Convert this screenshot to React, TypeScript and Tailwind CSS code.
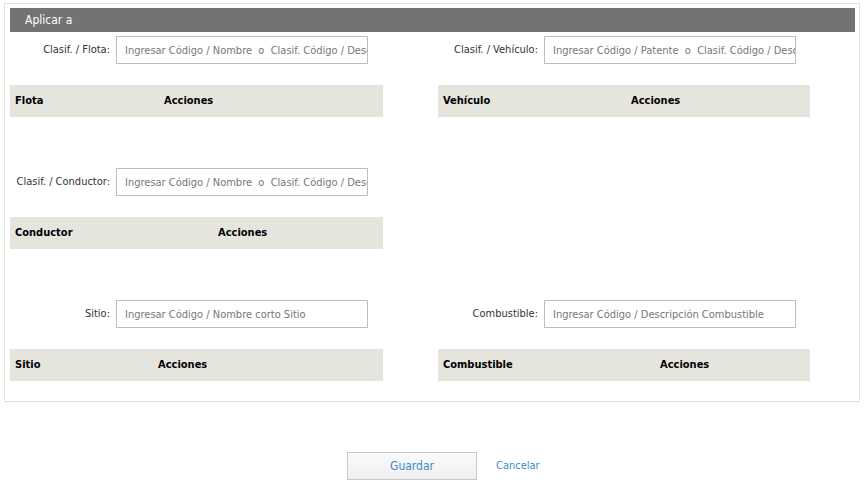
import React from "react";

const font = { fontFamily: '"DejaVu Sans Condensed", "Liberation Sans", sans-serif' };

function Field({ label, placeholder }: { label: string; placeholder: string }) {
  return (
    <div className="flex h-[28px] items-center">
      <div className="w-[106px] pr-[6px] text-right text-[11px] text-[#333]">{label}</div>
      <input
        readOnly
        placeholder={placeholder}
        className="h-[28px] w-[252px] border border-[#bdbdbd] bg-white pl-[8px] text-[11px] text-[#777] outline-none placeholder:text-[#777]"
        style={font}
      />
    </div>
  );
}

function TableHead({ first, col, width }: { first: string; col: number; width: number }) {
  return (
    <div className="mt-[21px] flex h-[32px] items-center bg-[#e5e5dd] pl-[5px] text-[11px] font-bold text-black" style={{ width }}>
      <div style={{ width: col }}>{first}</div>
      <div>Acciones</div>
    </div>
  );
}

export default function App() {
  return (
    <div className="h-[486px] w-[865px] bg-white" style={font}>
      <div className="ml-[4px] mt-[3px] h-[399px] w-[856px] border border-[#e2e2d9] px-[5px] pt-[4px]">
        <div className="flex h-[24px] w-[845px] items-center bg-[#737373] pl-[15px] text-[12px] text-white">Aplicar a</div>
        <div className="mt-[4px] flex">
          <div className="w-[428px]">
            <Field label="Clasif. / Flota:" placeholder="Ingresar Código / Nombre  o  Clasif. Código / Descripción" />
            <TableHead first="Flota" col={149} width={373} />
          </div>
          <div>
            <Field label="Clasif. / Vehículo:" placeholder="Ingresar Código / Patente  o  Clasif. Código / Descripción" />
            <TableHead first="Vehículo" col={188} width={372} />
          </div>
        </div>
        <div className="mt-[51px] flex">
          <div className="w-[428px]">
            <Field label="Clasif. / Conductor:" placeholder="Ingresar Código / Nombre  o  Clasif. Código / Descripción" />
            <TableHead first="Conductor" col={203} width={373} />
          </div>
        </div>
        <div className="mt-[51px] flex">
          <div className="w-[428px]">
            <Field label="Sitio:" placeholder="Ingresar Código / Nombre corto Sitio" />
            <TableHead first="Sitio" col={143} width={373} />
          </div>
          <div>
            <Field label="Combustible:" placeholder="Ingresar Código / Descripción Combustible" />
            <TableHead first="Combustible" col={217} width={372} />
          </div>
        </div>
      </div>
      <div className="mt-[50px] flex items-center pl-[347px]">
        <button className="h-[28px] w-[130px] border border-[#c8c8c8] bg-gradient-to-b from-[#fafafa] to-[#f0f0f0] text-[12px] text-[#3b8ccb]">
          Guardar
        </button>
        <span className="ml-[19px] text-[11px] text-[#3b8ccb]">Cancelar</span>
      </div>
    </div>
  );
}
